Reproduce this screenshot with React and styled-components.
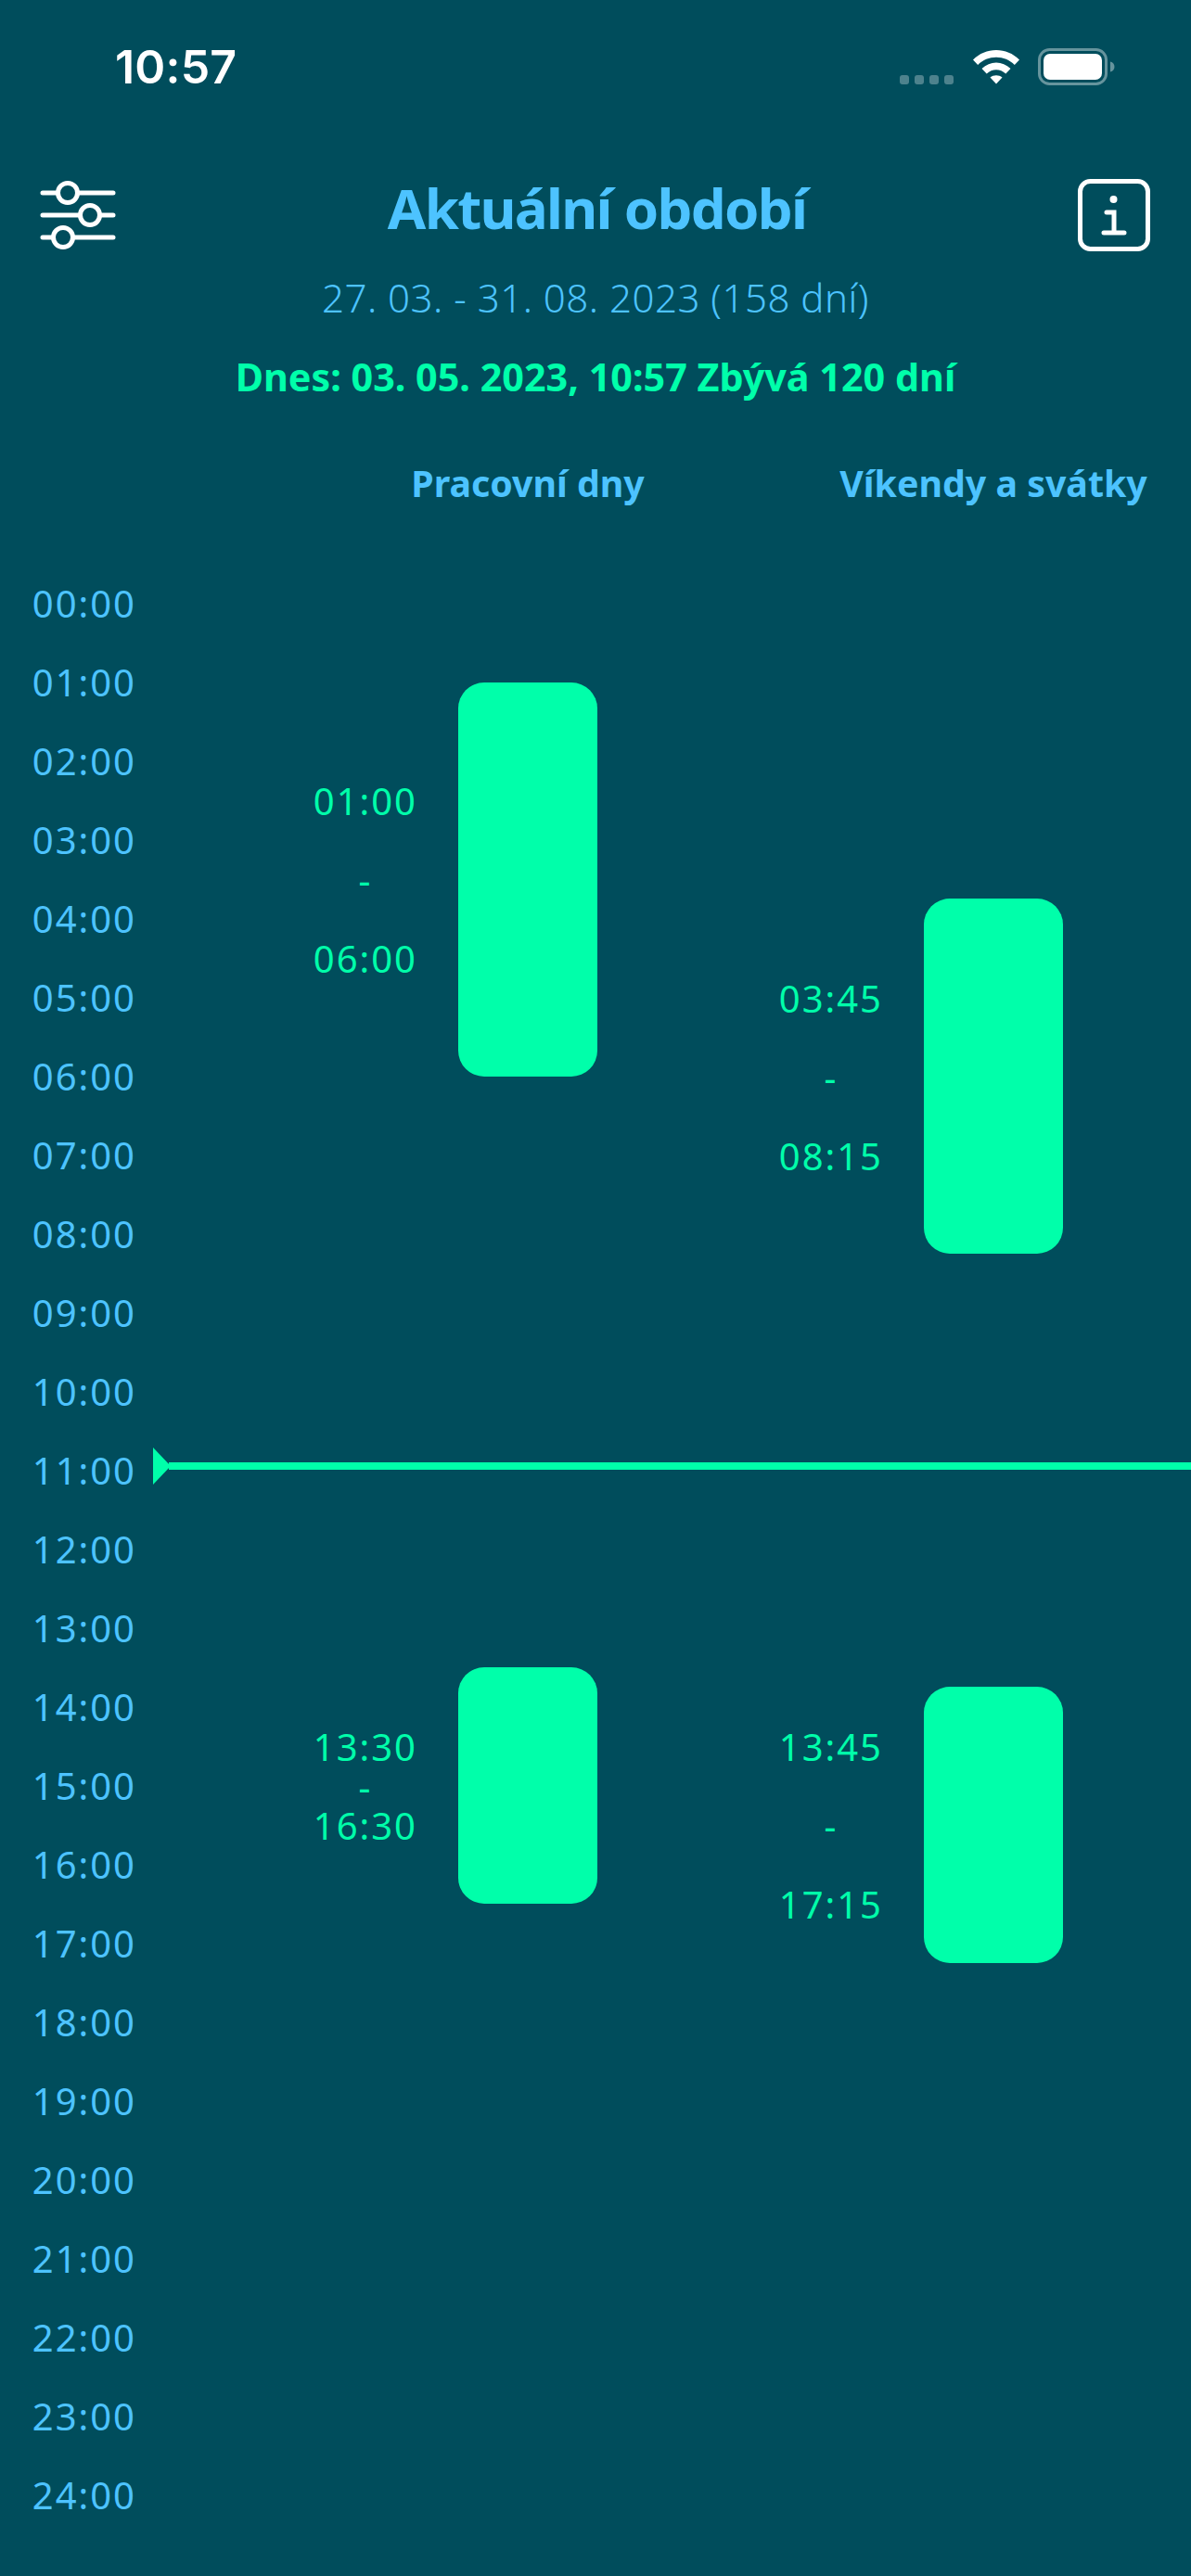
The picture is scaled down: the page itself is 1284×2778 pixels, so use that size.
import styled, { createGlobalStyle } from 'styled-components'

const GREEN = '#00ffaa'
const BLUE = '#4dc3ff'
const BACKGROUND = '#004d5c'
const HOUR_HEIGHT = 85

const GlobalStyle = createGlobalStyle`
  html, body {
    margin: 0;
    padding: 0;
    background: ${BACKGROUND};
  }
`

const Page = styled.div`
  width: 1284px;
  height: 2778px;
  overflow: hidden;
  background: ${BACKGROUND};
  font-family: 'Noto Sans', 'Open Sans', sans-serif;
`

const StatusBar = styled.div`
  height: 144px;
  display: flex;
  align-items: center;
  justify-content: space-between;
  padding: 0 82px 0 124px;
  box-sizing: border-box;
`

const Clock = styled.span`
  font-family: Inter, sans-serif;
  font-size: 50px;
  font-weight: 600;
  letter-spacing: 0.2px;
  color: #fff;
`

const StatusIcons = styled.div`
  display: flex;
  align-items: center;
`

const Header = styled.div`
  margin-top: 49px;
  padding: 0 44px 0 43px;
  display: flex;
  justify-content: space-between;
  align-items: flex-start;
`

const Title = styled.h1`
  margin: 0;
  font-size: 60px;
  line-height: 62px;
  font-weight: 700;
  letter-spacing: -1.700px;
  color: ${BLUE};
`

const Period = styled.div`
  margin-top: 25px;
  text-align: center;
  font-size: 42px;
  letter-spacing: 0.5px;
  line-height: 50px;
  font-weight: 300;
  color: ${BLUE};
`

const Today = styled.div`
  margin-top: 35px;
  text-align: center;
  font-size: 41.300px;
  line-height: 50px;
  font-weight: 700;
  color: ${GREEN};
`

const Columns = styled.div`
  display: grid;
  grid-template-columns: 145px 499px 502px;
`

const Heads = styled(Columns)`
  margin-top: 65px;
`

const Head = styled.div`
  grid-column: ${(props) => props.$column};
  justify-self: end;
  width: 150px;
  display: flex;
  justify-content: center;
  white-space: nowrap;
  font-size: 39.300px;
  line-height: 50px;
  font-weight: 700;
  color: ${BLUE};
`

const Schedule = styled(Columns)`
  position: relative;
  margin-top: 64px;
`

const Hours = styled.div`
  margin: -2px -2px 0 0;
  display: flex;
  flex-direction: column;
`

const Hour = styled.div`
  height: ${HOUR_HEIGHT}px;
  line-height: ${HOUR_HEIGHT}px;
  text-align: right;
  font-size: 40px;
  letter-spacing: 2px;
  color: ${BLUE};
`

const Day = styled.div`
  padding-top: ${HOUR_HEIGHT / 2 - 2}px;
  display: grid;
  grid-template-rows: repeat(96, ${HOUR_HEIGHT / 4}px);
`

const Slot = styled.div`
  grid-row: ${(props) => props.$from + 1} / ${(props) => props.$to + 1};
  display: flex;
  justify-content: flex-end;
  gap: 44px;
`

const SlotTimes = styled.div`
  padding-top: 3px;
  display: flex;
  flex-direction: column;
  justify-content: center;
  align-items: center;
  gap: ${(props) => props.$spread}px;
  color: ${GREEN};
  font-size: 40px;
  letter-spacing: 2px;
  line-height: 42.5px;
`

const Bar = styled.div`
  width: 150px;
  border-radius: 28px;
  background: ${GREEN};
`

const NowLine = styled.div`
  position: absolute;
  left: 165px;
  right: 0;
  top: ${(props) => Math.round(props.$offset)}px;
  height: 8px;
  display: flex;
  align-items: center;
  background: linear-gradient(${GREEN}, ${GREEN}) no-repeat 17px 0 / 100% 100%;
`

const NowArrow = styled.div`
  width: 0;
  height: 0;
  border-style: solid;
  border-width: 20px 0 20px 19px;
  border-color: transparent transparent transparent ${GREEN};
`

const Signal = () => (
  <svg width="60" height="12" viewBox="0 0 60 12" style={{ marginTop: 28, marginRight: 18 }}>
    {[0, 16, 32, 48].map((x) => (
      <rect key={x} x={x} y="1" width="10" height="10" rx="3" fill="#fff" opacity="0.3" />
    ))}
  </svg>
)

const Wifi = () => (
  <svg width="52" height="38" viewBox="0 0 52 38" style={{ marginRight: 19 }}>
    <path
      d="M1 11.5C8 4.5 16.5 1 26 1s18 3.500 25 10.500l-5.200 5.500C40.500 11.500 33.500 8.700 26 8.700S11.500 11.500 6.200 17z"
      fill="#fff"
    />
    <path
      d="M10.500 21C15 16.800 20.300 14.500 26 14.500S37 16.800 41.500 21l-5.200 5.500C33.300 23.800 29.800 22.300 26 22.300s-7.300 1.500-10.300 4.200z"
      fill="#fff"
    />
    <path d="M19.500 30.500c1.800-1.500 4.100-2.300 6.500-2.300s4.700.8 6.500 2.300L26 37.500z" fill="#fff" />
  </svg>
)

const Battery = () => (
  <svg width="83" height="40" viewBox="0 0 83 40">
    <rect x="1.500" y="1.500" width="72" height="37" rx="11" fill="none" stroke="#fff" strokeOpacity="0.4" strokeWidth="3" />
    <rect x="6" y="6" width="63" height="28" rx="7" fill="#fff" />
    <path d="M78 14.500c3 .8 4.500 3 4.500 5.500s-1.500 4.700-4.500 5.500z" fill="#fff" fillOpacity="0.4" />
  </svg>
)

const FilterIcon = () => (
  <svg width="82" height="78" viewBox="0 0 82 78" fill="none" stroke="#fff" strokeWidth="5" strokeLinecap="round">
    <path d="M3 15h16M41 15h38M3 39h40M65 39h14M3 63h11M36 63h43" />
    <circle cx="30" cy="15" r="10.500" />
    <circle cx="54" cy="39" r="10.500" />
    <circle cx="25" cy="63" r="10.500" />
  </svg>
)

const InfoIcon = () => (
  <svg width="78" height="78" viewBox="0 0 78 78" fill="none" stroke="#fff" strokeWidth="5" strokeLinecap="round">
    <rect x="2.500" y="2.500" width="73" height="73" rx="11" />
    <circle cx="38.500" cy="22" r="4" fill="#fff" stroke="none" />
    <path d="M31 36h8v22M28 58h22" />
  </svg>
)

const hours = Array.from({ length: 25 }, (_, i) => `${String(i).padStart(2, '0')}:00`)

const workdays = [
  { from: 4, to: 24, start: '01:00', end: '06:00', spread: 42.5 },
  { from: 54, to: 66, start: '13:30', end: '16:30', spread: 0 },
]

const weekends = [
  { from: 15, to: 33, start: '03:45', end: '08:15', spread: 42.5 },
  { from: 55, to: 69, start: '13:45', end: '17:15', spread: 42.5 },
]

const DayColumn = ({ slots }) => (
  <Day>
    {slots.map((slot) => (
      <Slot key={slot.start} $from={slot.from} $to={slot.to}>
        <SlotTimes $spread={slot.spread}>
          <span>{slot.start}</span>
          <span>-</span>
          <span>{slot.end}</span>
        </SlotTimes>
        <Bar />
      </Slot>
    ))}
  </Day>
)

const App = () => {
  return (
    <Page>
      <GlobalStyle />
      <StatusBar>
        <Clock>10:57</Clock>
        <StatusIcons>
          <Signal />
          <Wifi />
          <Battery />
        </StatusIcons>
      </StatusBar>
      <Header>
        <FilterIcon />
        <Title>Aktuální období</Title>
        <InfoIcon />
      </Header>
      <Period>27. 03. - 31. 08. 2023 (158 dní)</Period>
      <Today>Dnes: 03. 05. 2023, 10:57 Zbývá 120 dní</Today>
      <Heads>
        <Head $column={2}>Pracovní dny</Head>
        <Head $column={3}>Víkendy a svátky</Head>
      </Heads>
      <Schedule>
        <Hours>
          {hours.map((hour) => (
            <Hour key={hour}>{hour}</Hour>
          ))}
        </Hours>
        <DayColumn slots={workdays} />
        <DayColumn slots={weekends} />
        <NowLine $offset={(10 + 57 / 60) * HOUR_HEIGHT + HOUR_HEIGHT / 2 - 6}>
          <NowArrow />
        </NowLine>
      </Schedule>
    </Page>
  )
}

export default App
